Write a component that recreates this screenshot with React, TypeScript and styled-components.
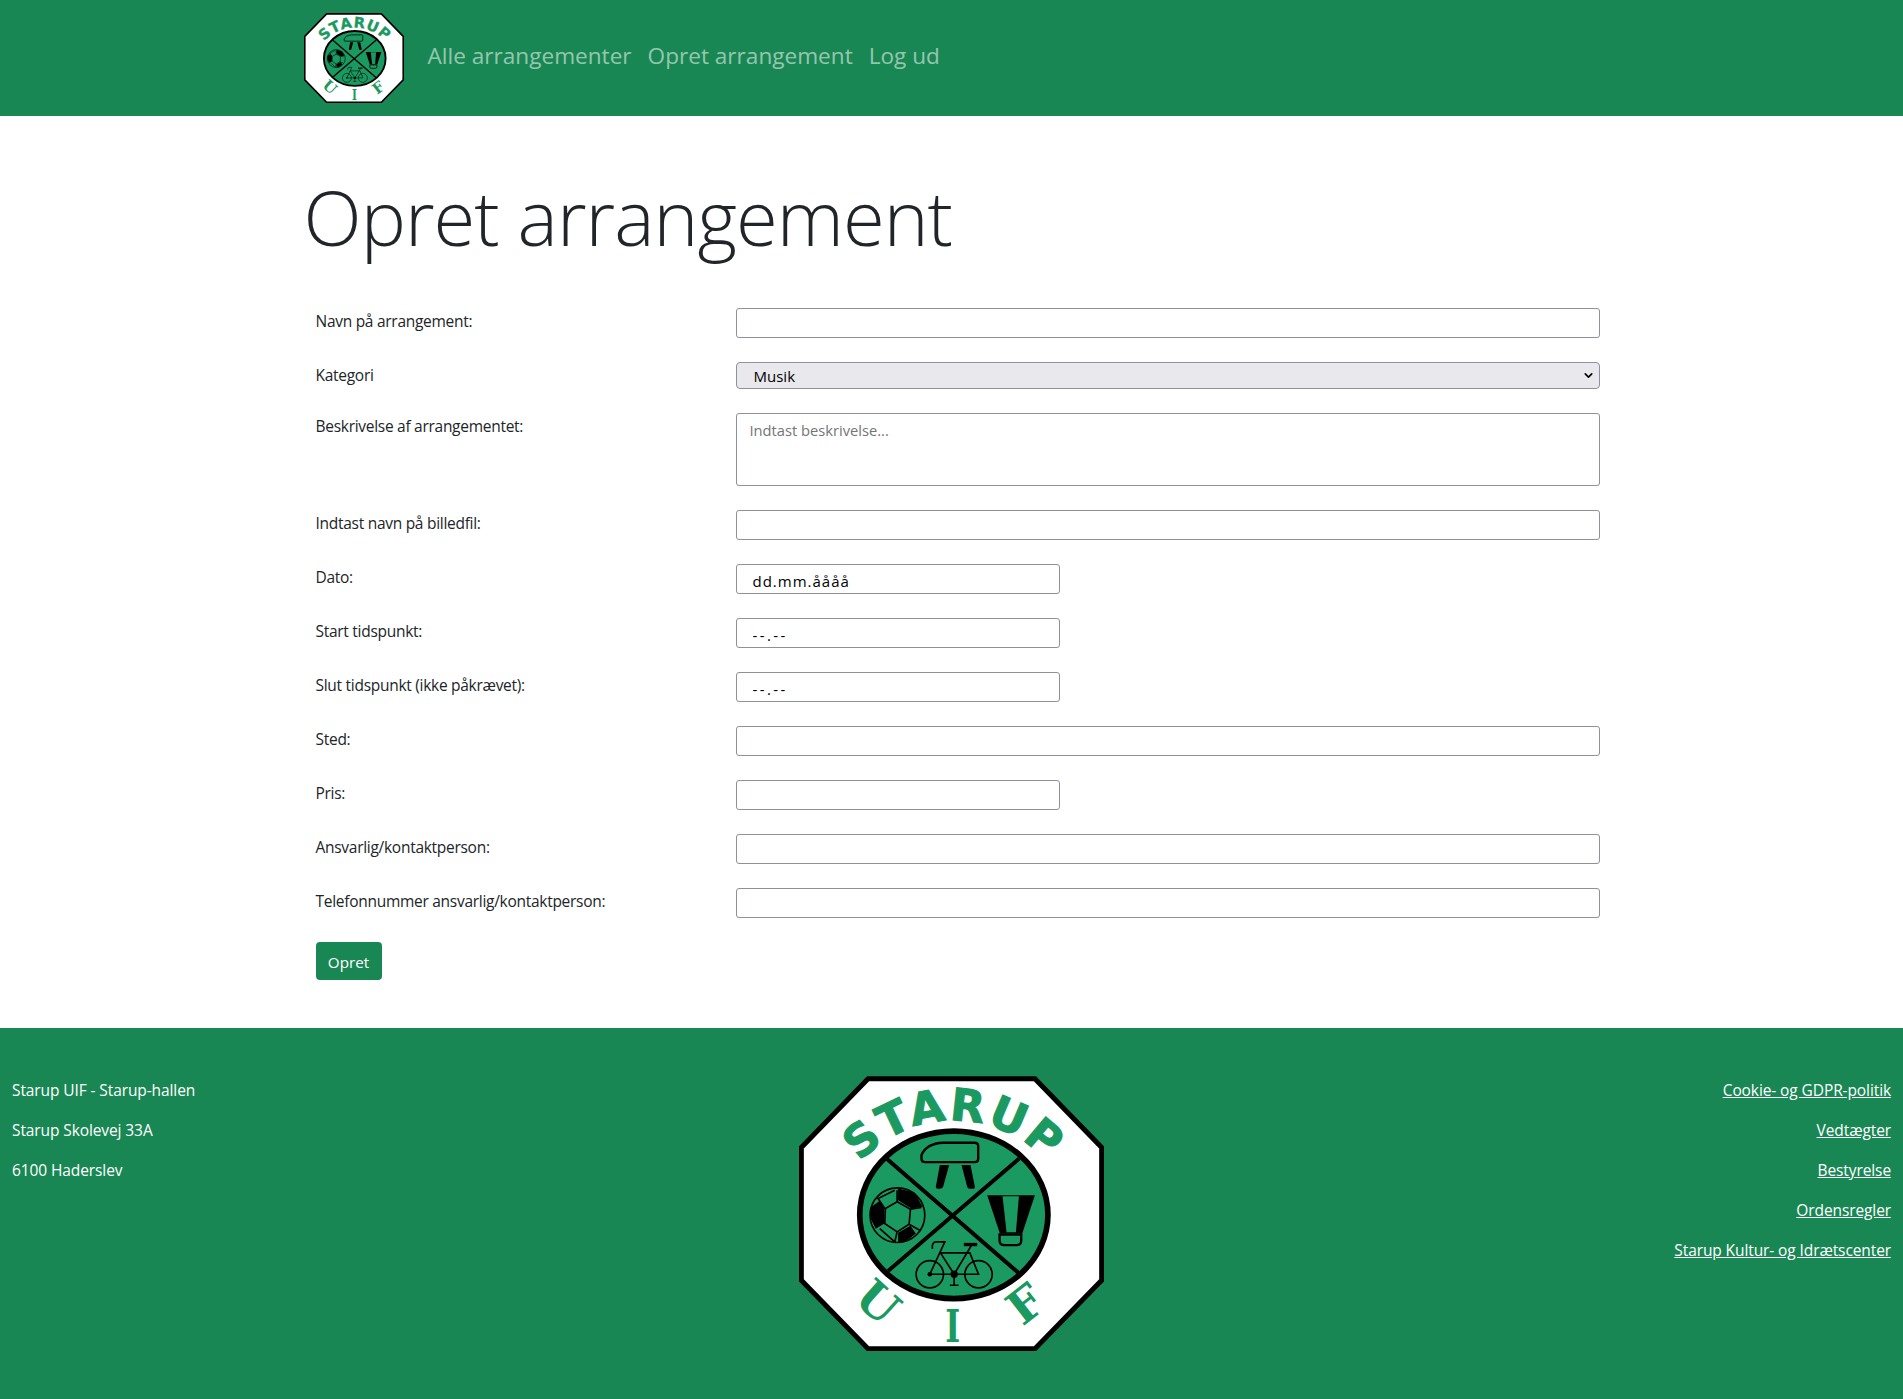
import React from "react";
import styled, { createGlobalStyle } from "styled-components";
import { ChevronDown } from "lucide-react";

const Global = createGlobalStyle`
  * { box-sizing: border-box; }
  html, body { margin: 0; padding: 0; background: #fff; }
  body {
    font-family: "Open Sans", "Noto Sans", sans-serif;
    font-size: 15.5px;
    line-height: 24px;
    color: #212529;
  }
`;

const Header = styled.header`
  height: 116px;
  background: #198754;
`;
const HeaderInner = styled.div`
  width: 1320px;
  margin: 0 auto;
  padding: 0 12px;
  height: 100%;
  display: flex;
  align-items: center;
`;
const HeaderLogo = styled.a`
  display: block;
  width: 100px;
  height: 90px;
  margin-right: 16px;
`;
const Nav = styled.nav`
  display: flex;
  margin-top: -5px;
`;
const NavLink = styled.a`
  padding: 8px;
  font-size: 22.6px;
  line-height: 36px;
  color: rgba(255, 255, 255, 0.55);
  text-decoration: none;
`;
const Main = styled.main`
  width: 1320px;
  margin: 0 auto;
  padding: 53px 12px 48px;
`;
const Title = styled.h1`
  margin: 0 0 43px;
  font-size: 76px;
  font-weight: 300;
  line-height: 96px;
  letter-spacing: -0.95px;
`;
const Form = styled.form`
  display: flex;
  flex-direction: column;
  gap: 24px;
  padding: 0 12px;
`;
const Row = styled.div`
  display: grid;
  grid-template-columns: 420px 864px;
  align-items: start;
`;
const Label = styled.label`
  padding-top: 1px;
  letter-spacing: -0.28px;
`;
const Field = styled.input<{ $small?: boolean; $time?: boolean }>`
  display: block;
  width: ${(p) => (p.$small ? "324px" : "100%")};
  height: 30px;
  padding: 3px 16px 0;
  border: 1px solid #8f8f9d;
  border-radius: 3px;
  background: #fff;
  color: #000;
  font-family: inherit;
  font-size: 15px;
  letter-spacing: ${(p) => (p.$time ? "2.4px" : "1px")};
  outline: none;
`;
const SelectWrap = styled.div`
  position: relative;
  height: 27px;
`;
const Select = styled.select`
  display: block;
  width: 100%;
  height: 100%;
  padding: 0 0 0 17px;
  appearance: none;
  border: 1px solid #8f8f9d;
  border-radius: 4px;
  background: #e9e9ed;
  color: #000;
  font-family: inherit;
  font-size: 15px;
  outline: none;
`;
const Chevron = styled.span`
  position: absolute;
  top: 7px;
  right: 5px;
  display: flex;
  color: #000;
  pointer-events: none;
`;
const Area = styled.textarea`
  display: block;
  width: 100%;
  height: 73px;
  padding: 6px 13px;
  resize: none;
  border: 1px solid #8f8f9d;
  border-radius: 3px;
  font-family: inherit;
  font-size: 14.7px;
  outline: none;
  &::placeholder { color: #757575; opacity: 1; }
`;
const Submit = styled.button`
  align-self: flex-start;
  width: 66px;
  height: 38px;
  padding: 2px 0 0;
  border: 0;
  border-radius: 4px;
  background: #198754;
  color: #fff;
  font-family: inherit;
  font-size: 15.2px;
`;
const Footer = styled.footer`
  background: #198754;
  padding: 48px 12px;
  display: grid;
  grid-template-columns: 1fr 305px 1fr;
  color: #fff;
`;
const FooterCol = styled.div<{ $right?: boolean }>`
  padding-top: 2px;
  text-align: ${(p) => (p.$right ? "right" : "left")};
`;
const FooterLine = styled.p`
  margin: 0 0 16px;
  letter-spacing: -0.1px;
`;
const FooterLink = styled.a`
  color: #fff;
  text-decoration: underline;
`;
const FooterLogo = styled.div`
  width: 305px;
  height: 275px;
`;

const G = "#1a9960";

function Logo() {
  return (
    <svg viewBox="58 48 914 824" width="100%" height="100%" preserveAspectRatio="none">
      <defs>
        <path id="starup-arc" d="M 144 560 A 378 378 0 0 1 900 560" />
      </defs>
      <polygon
        points="265,56 765,56 965,262 965,660 765,865 265,865 65,660 65,262"
        fill="#fff"
        stroke="#000"
        strokeWidth="15"
      />
      <text fontFamily="'DejaVu Sans', sans-serif" fontWeight="700" fontSize="134" fill={G} stroke={G} strokeWidth="3" letterSpacing="7" textAnchor="middle">
        <textPath href="#starup-arc" startOffset="50%">STARUP</textPath>
      </text>
      <text fontFamily="'DejaVu Serif', serif" fontWeight="700" fontSize="138" fill={G} textAnchor="middle" transform="translate(262,762) rotate(42)">U</text>
      <text fontFamily="'DejaVu Serif', serif" fontWeight="700" fontSize="137" fill={G} textAnchor="middle" transform="translate(519,845) scale(0.7,1)">I</text>
      <text fontFamily="'DejaVu Serif', serif" fontWeight="700" fontSize="138" fill={G} textAnchor="middle" transform="translate(766,769) rotate(-38)">F</text>
      <ellipse cx="522" cy="464" rx="282" ry="251" fill={G} stroke="#000" strokeWidth="17" />
      <path d="M320 295 L718 640 M718 295 L325 632" stroke="#000" strokeWidth="12" fill="none" />
      <path d="M436 306 H585 Q595 306 595 296 V258 Q595 248 585 248 H490 Q440 250 425 285 V296 Q425 306 436 306 Z" fill="none" stroke="#000" strokeWidth="7" />
      <path d="M480 315 H508 L490 380 Q488 386 480 386 H474 Q467 386 468 380 Z M545 315 H572 L585 380 Q586 386 578 386 H570 Q563 386 562 380 Z" fill="#000" />
      <circle cx="353" cy="465" r="82" fill={G} stroke="#000" strokeWidth="5" />
      <path d="M355 385 L405 398 L428 440 L395 445 L355 420 Z M272 442 L300 422 L314 447 L314 490 L288 506 L271 472 Z M355 518 L392 497 L408 520 L378 545 L355 546 Z" fill="#000" />
      <path d="M352 425 L392 447 L388 492 L352 515 L315 490 L317 445 Z M352 425 V390 M392 447 L425 442 M388 492 L420 510 M352 515 L345 545 L300 505 M315 445 L295 415 L345 390" fill="none" stroke="#000" strokeWidth="5" />
      <path d="M622 405 H765 L727 520 H660 Z" fill="#000" />
      <path d="M668 408 H717 L708 516 H680 Z" fill={G} />
      <path d="M659 523 H724 V540 Q724 555 709 555 H674 Q659 555 659 540 Z" fill={G} stroke="#000" strokeWidth="7" />
      <g fill="none" stroke="#000" strokeWidth="5">
        <circle cx="450" cy="642" r="41" />
        <circle cx="596" cy="642" r="41" />
        <path d="M458 566 Q455 545 470 545 H495 L450 642 L523 642 L596 642 L570 578 H482 L523 642 L575 555 M523 642 V675 M510 675 H536" />
      </g>
      <path d="M552 553 H592" stroke="#000" strokeWidth="10" />
      <circle cx="523" cy="642" r="11" fill="#000" />
      <circle cx="450" cy="642" r="7" fill="#000" />
    </svg>
  );
}

const rows: { label: string; small?: boolean; time?: boolean; value?: string }[] = [
  { label: "Indtast navn på billedfil:" },
  { label: "Dato:", small: true, value: "dd.mm.åååå" },
  { label: "Start tidspunkt:", small: true, time: true, value: "--.--" },
  { label: "Slut tidspunkt (ikke påkrævet):", small: true, time: true, value: "--.--" },
  { label: "Sted:" },
  { label: "Pris:", small: true },
  { label: "Ansvarlig/kontaktperson:" },
  { label: "Telefonnummer ansvarlig/kontaktperson:" },
];

const links = ["Cookie- og GDPR-politik", "Vedtægter", "Bestyrelse", "Ordensregler", "Starup Kultur- og Idrætscenter"];

export default function App() {
  return (
    <>
      <Global />
      <Header>
        <HeaderInner>
          <HeaderLogo href="#"><Logo /></HeaderLogo>
          <Nav>
            <NavLink href="#">Alle arrangementer</NavLink>
            <NavLink href="#">Opret arrangement</NavLink>
            <NavLink href="#">Log ud</NavLink>
          </Nav>
        </HeaderInner>
      </Header>
      <Main>
        <Title>Opret arrangement</Title>
        <Form onSubmit={(e) => e.preventDefault()}>
          <Row>
            <Label>Navn på arrangement:</Label>
            <Field type="text" />
          </Row>
          <Row>
            <Label>Kategori</Label>
            <SelectWrap>
              <Select defaultValue="Musik"><option>Musik</option></Select>
              <Chevron><ChevronDown size={13} strokeWidth={3} /></Chevron>
            </SelectWrap>
          </Row>
          <Row>
            <Label>Beskrivelse af arrangementet:</Label>
            <Area placeholder="Indtast beskrivelse..." />
          </Row>
          {rows.map((r) => (
            <Row key={r.label}>
              <Label>{r.label}</Label>
              <Field type="text" $small={r.small} $time={r.time} defaultValue={r.value} />
            </Row>
          ))}
          <Submit type="submit">Opret</Submit>
        </Form>
      </Main>
      <Footer>
        <FooterCol>
          <FooterLine>Starup UIF - Starup-hallen</FooterLine>
          <FooterLine>Starup Skolevej 33A</FooterLine>
          <FooterLine>6100 Haderslev</FooterLine>
        </FooterCol>
        <FooterLogo><Logo /></FooterLogo>
        <FooterCol $right>
          {links.map((l) => (
            <FooterLine key={l}><FooterLink href="#">{l}</FooterLink></FooterLine>
          ))}
        </FooterCol>
      </Footer>
    </>
  );
}
